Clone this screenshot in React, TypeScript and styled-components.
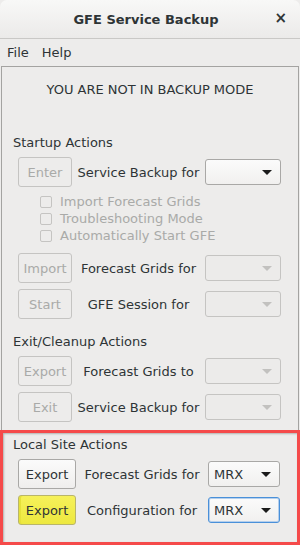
import React from 'react';
import styled, { createGlobalStyle } from 'styled-components';

const GlobalStyle = createGlobalStyle`
    html, body {
        margin: 0;
        padding: 0;
        background: #ffffff;
    }
    body {
        font-family: 'DejaVu Sans', 'Liberation Sans', sans-serif;
        font-size: 13px;
        color: #2e3436;
    }
`;

interface ActionRowProps {
    button: string;
    label: string;
    value?: string;
    enabled?: boolean;
    comboEnabled?: boolean;
    highlight?: boolean;
    focused?: boolean;
}

const ActionRow = ({ button, label, value, enabled, comboEnabled, highlight, focused }: ActionRowProps) => {
    const comboOn = comboEnabled ?? enabled;
    return (
        <Row $wide={enabled}>
            <Button $enabled={enabled} $highlight={highlight}>
                {button}
            </Button>
            <RowLabel>{label}</RowLabel>
            <Combo $enabled={comboOn} $focused={focused}>
                <span>{value}</span>
                <Arrow $enabled={comboOn} />
            </Combo>
        </Row>
    );
};

const Check = ({ label }: { label: string }) => (
    <CheckRow>
        <CheckBox />
        <span>{label}</span>
    </CheckRow>
);

/**
 * GFE service backup window
 */
const App = () => {
    return (
        <>
            <GlobalStyle />
            <Window>
                <TitleBar>
                    <Title>GFE Service Backup</Title>
                    <Close>×</Close>
                </TitleBar>
                <MenuBar>
                    <MenuItem>File</MenuItem>
                    <MenuItem>Help</MenuItem>
                </MenuBar>
                <Panel>
                    <Banner>YOU ARE NOT IN BACKUP MODE</Banner>

                    <Heading $top={37}>Startup Actions</Heading>
                    <ActionRow button="Enter" label="Service Backup for" value="" comboEnabled />
                    <Checks>
                        <Check label="Import Forecast Grids" />
                        <Check label="Troubleshooting Mode" />
                        <Check label="Automatically Start GFE" />
                    </Checks>
                    <Rows>
                        <ActionRow button="Import" label="Forecast Grids for" />
                        <ActionRow button="Start" label="GFE Session for" />
                    </Rows>

                    <Heading $top={15}>Exit/Cleanup Actions</Heading>
                    <Rows>
                        <ActionRow button="Export" label="Forecast Grids to" />
                        <ActionRow button="Exit" label="Service Backup for" />
                    </Rows>
                </Panel>
                <LocalBox>
                    <Heading $top={0}>Local Site Actions</Heading>
                    <Rows>
                        <ActionRow button="Export" label="Forecast Grids for" value="MRX" enabled />
                        <ActionRow
                            button="Export"
                            label="Configuration for"
                            value="MRX"
                            enabled
                            highlight
                            focused
                        />
                    </Rows>
                </LocalBox>
            </Window>
        </>
    );
};

export default App;

const Window = styled.div`
    width: 300px;
    height: 545px;
    display: flex;
    flex-direction: column;
    background: #edeceb;
    overflow: hidden;
`;

const TitleBar = styled.div`
    height: 38px;
    flex: none;
    display: flex;
    align-items: center;
    justify-content: center;
    position: relative;
    border-bottom: 1px solid #c9c8c6;
    border-radius: 7px 7px 0 0;
    background: linear-gradient(#f8f8f7, #ebeae9);
`;

const Title = styled.div`
    font-weight: 700;
    font-size: 13px;
    color: #2e3436;
    margin-left: -8px;
`;

const Close = styled.div`
    position: absolute;
    right: 13px;
    top: 10px;
    font-size: 15px;
    line-height: 16px;
    font-weight: 700;
    color: #2e3436;
`;

const MenuBar = styled.div`
    height: 27px;
    flex: none;
    display: flex;
    align-items: center;
    gap: 13px;
    padding-left: 7px;
    background: #edeceb;
`;

const MenuItem = styled.span`
    font-size: 13px;
    color: #2e3436;
`;

const Panel = styled.div`
    margin: 0 1px;
    height: 364px;
    flex: none;
    box-sizing: border-box;
    border: 1px solid #a4a3a1;
    border-bottom: none;
    padding: 15px 17px 0 16px;
    display: flex;
    flex-direction: column;
`;

const Banner = styled.div`
    text-align: center;
    line-height: 16px;
    margin-left: 1px;
`;

const Heading = styled.div<{ $top: number }>`
    margin-top: ${(p) => p.$top}px;
    margin-left: -5px;
    margin-bottom: 6px;
    line-height: 16px;
`;

const Rows = styled.div`
    display: flex;
    flex-direction: column;
    gap: 6px;
`;

const Row = styled.div<{ $wide?: boolean }>`
    display: grid;
    grid-template-columns: ${(p) => (p.$wide ? '58px 1fr 72px' : '54px 1fr 76px')};
    align-items: center;
    height: 30px;
`;

const Button = styled.div<{ $enabled?: boolean; $highlight?: boolean }>`
    height: 30px;
    box-sizing: border-box;
    display: flex;
    align-items: center;
    justify-content: center;
    border-radius: 3px;
    border: 1px solid ${(p) => (p.$enabled ? '#a9a8a6' : '#c5c4c2')};
    color: ${(p) => (p.$enabled ? '#2e3436' : '#a9aaa8')};
    background: ${(p) =>
        p.$highlight
            ? 'linear-gradient(#f6f15a, #ede83f)'
            : p.$enabled
              ? 'linear-gradient(#fbfbfb, #efeeed)'
              : '#edeceb'};
    ${(p) => p.$highlight && 'box-shadow: inset 2px 0 0 #e6e13a; border-color: #b9b56a;'}
`;

const RowLabel = styled.div`
    text-align: center;
    white-space: nowrap;
`;

const Combo = styled.div<{ $enabled?: boolean; $focused?: boolean }>`
    height: 26px;
    box-sizing: border-box;
    display: flex;
    align-items: center;
    justify-content: space-between;
    padding: 0 8px 0 5px;
    border-radius: 3px;
    border: 1px solid ${(p) => (p.$focused ? '#4a90d9' : p.$enabled ? '#a9a8a6' : '#c5c4c2')};
    background: ${(p) => (p.$enabled ? 'linear-gradient(#fbfbfb, #f1f0ef)' : '#ecebea')};
    color: #2e3436;
    ${(p) => p.$focused && 'box-shadow: inset 0 0 0 1px #b5cfec;'}
`;

const Arrow = styled.span<{ $enabled?: boolean }>`
    width: 0;
    height: 0;
    border-left: 5px solid transparent;
    border-right: 5px solid transparent;
    border-top: 5px solid ${(p) => (p.$enabled ? '#1b1b1b' : '#c2c1bf')};
`;

const Checks = styled.div`
    display: flex;
    flex-direction: column;
    margin: 6px 0 9px 22px;
`;

const CheckRow = styled.div`
    height: 17px;
    display: flex;
    align-items: center;
    gap: 8px;
    color: #a9aaa8;
`;

const CheckBox = styled.span`
    width: 12px;
    height: 12px;
    box-sizing: border-box;
    border: 1px solid #c5c4c2;
    border-radius: 2px;
    background: #edeceb;
`;

const LocalBox = styled.div`
    flex: 1;
    box-sizing: border-box;
    border: 3px solid #f54a4a;
    box-shadow: inset 1px 1px 2px #b3b2b0;
    padding: 4px 17px 0 15px;
    display: flex;
    flex-direction: column;
`;
